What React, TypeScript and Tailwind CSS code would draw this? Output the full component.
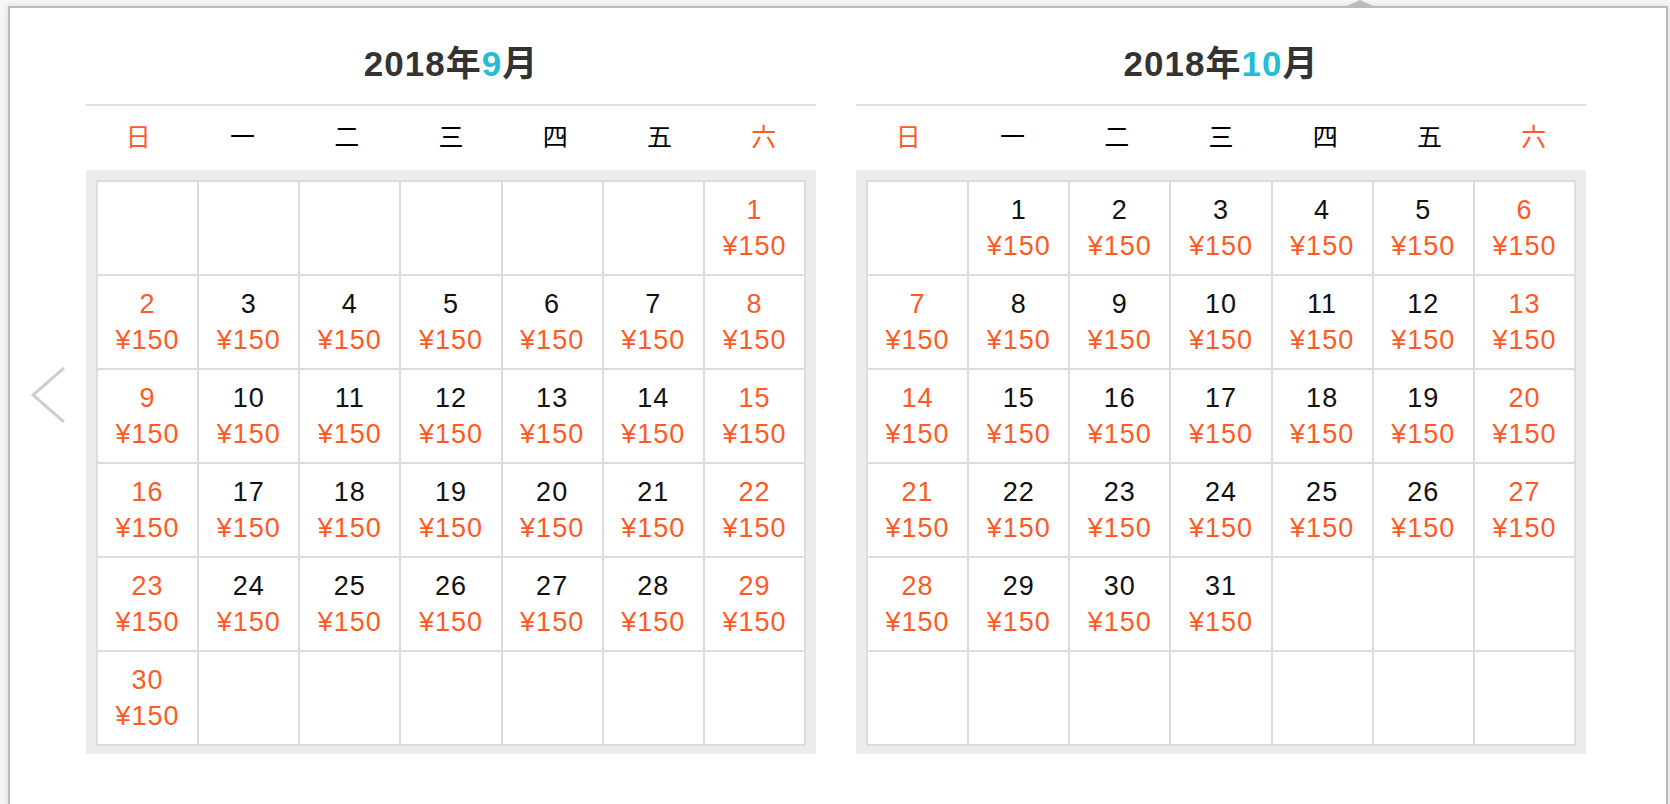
import React from "react";

const FONT = "font-['Liberation_Sans','Noto_Sans_CJK_JP',sans-serif]";
const WEEK = ["日", "一", "二", "三", "四", "五", "六"];

type Month = { label: string; firstDay: number; days: number };

const months: Month[] = [
    { label: "9", firstDay: 6, days: 30 },
    { label: "10", firstDay: 1, days: 31 },
];

function buildCells(m: Month) {
    const cells: (number | null)[] = [];
    for (let i = 0; i < m.firstDay; i++) cells.push(null);
    for (let d = 1; d <= m.days; d++) cells.push(d);
    while (cells.length < 42) cells.push(null);
    return cells;
}

function Calendar({ month }: { month: Month }) {
    const cells = buildCells(month);
    return (
        <div className="w-[730px]">
            {/* Title */}
            <div className="h-[96px] pt-[16px] flex items-center justify-center">
                <h2 className="text-[35px] font-bold text-[#333] leading-[40px] tracking-[1px]">
                    2018年<span className="text-[#26bcd6]">{month.label}</span>月
                </h2>
            </div>

            {/* Week header */}
            <div className="border-t-2 border-[#e0e0e0] grid grid-cols-7 h-[66px] items-center">
                {WEEK.map((w, i) => (
                    <div
                        key={w}
                        className={`text-center text-[25px] ${i === 0 || i === 6 ? "text-[#ff5a23]" : "text-black"}`}
                    >
                        {w}
                    </div>
                ))}
            </div>

            {/* Days */}
            <div className="bg-[#ececec] px-[10px] pt-[10px] pb-[8px]">
                <div className="grid grid-cols-7 gap-[2px] p-[2px] bg-[#dcdcdc]">
                    {cells.map((d, i) => {
                        const weekend = i % 7 === 0 || i % 7 === 6;
                        return (
                            <div
                                key={i}
                                className="bg-white h-[92px] flex flex-col items-center justify-center leading-[36px] text-[27px] tracking-[1px]"
                            >
                                {d !== null && (
                                    <>
                                        <span className={weekend ? "text-[#ff5a23]" : "text-[#111]"}>{d}</span>
                                        <span className="text-[#ff5a23]">¥150</span>
                                    </>
                                )}
                            </div>
                        );
                    })}
                </div>
            </div>
        </div>
    );
}

export default function App() {
    return (
        <div className={`${FONT} h-[804px] w-[1670px] overflow-hidden bg-[#f6f6f6] pt-[6px] pl-[8px]`}>
            <div className="relative w-[1660px] h-[820px] bg-white border-2 border-[#bbbbbb] shadow-[0_0_6px_rgba(0,0,0,0.12)]">
                {/* popover arrow */}
                <div className="absolute top-[-8px] left-[1335px] w-0 h-0 border-l-[15px] border-r-[15px] border-b-[7px] border-l-transparent border-r-transparent border-b-[#bbbbbb]" />

                {/* prev arrow */}
                <button className="absolute left-[20px] top-[358px] w-[36px] h-[58px]">
                    <svg width="36" height="58" viewBox="0 0 36 58" fill="none">
                        <polyline points="34,2 3,29 34,56" stroke="#cfcfcf" strokeWidth="3" />
                    </svg>
                </button>

                <div className="flex gap-[40px] pl-[76px]">
                    {months.map((m) => (
                        <Calendar key={m.label} month={m} />
                    ))}
                </div>
            </div>
        </div>
    );
}
